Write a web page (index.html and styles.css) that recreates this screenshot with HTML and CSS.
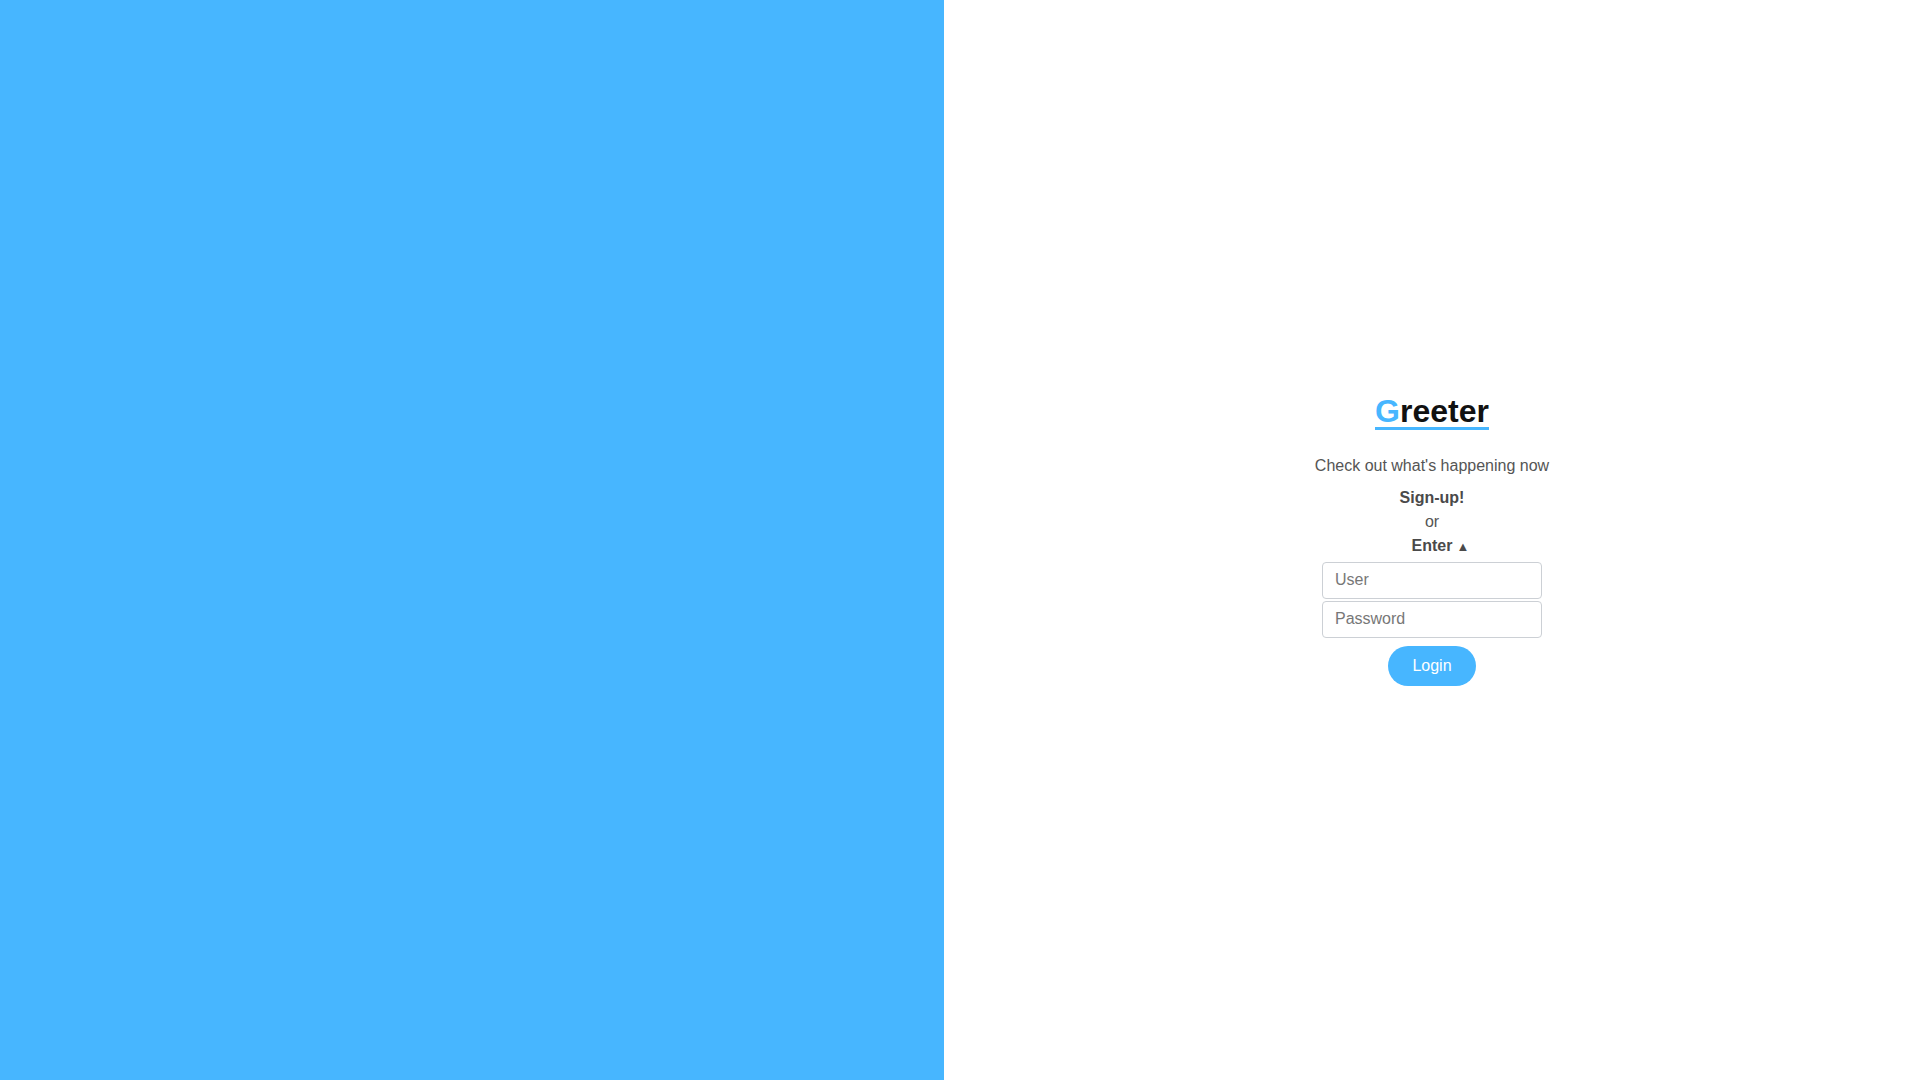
FILE: index.html
```html
<!DOCTYPE html>
<html lang="en">
<head>
<meta charset="utf-8">
<title>Greeter</title>
<link rel="stylesheet" href="styles.css">
</head>
<body>
<div class="page">
  <aside class="hero"></aside>
  <main class="panel">
    <div class="card">
      <h1 class="logo"><span class="logo-g">G</span>reeter</h1>
      <p class="tagline">Check out what's happening now</p>
      <a class="link bold" href="#">Sign-up!</a>
      <span class="or">or</span>
      <div class="enter bold">Enter<span class="arrow">▲</span></div>
      <form class="form">
        <input class="field" type="text" placeholder="User">
        <input class="field" type="password" placeholder="Password">
        <button class="btn" type="button">Login</button>
      </form>
    </div>
  </main>
</div>
</body>
</html>
```
FILE: styles.css
```css
* { box-sizing: border-box; }
html, body { margin: 0; height: 100%; }
body {
  font-family: "Liberation Sans", Arial, sans-serif;
  font-size: 16px;
  color: #555;
  background: #fff;
}
.page {
  display: flex;
  height: 100vh;
}
.hero {
  flex: 0 0 944px;
  background: #47b6ff;
}
.panel {
  flex: 1;
  display: flex;
  align-items: center;
  justify-content: center;
}
.card {
  display: flex;
  flex-direction: column;
  align-items: center;
}
.logo {
  margin: 0;
  font-size: 32px;
  font-weight: 700;
  line-height: 32px;
  color: #111;
  border-bottom: 3px solid #47b6ff;
}
.logo-g { color: #47b6ff; }
.tagline {
  margin: 24px 0 8px;
  line-height: 24px;
  color: #555;
}
.link {
  color: #4a4a4a;
  text-decoration: none;
  line-height: 24px;
}
.bold { font-weight: 700; }
.or {
  line-height: 24px;
  color: #555;
}
.enter {
  position: relative;
  line-height: 24px;
  color: #4a4a4a;
}
.arrow {
  position: absolute;
  left: 100%;
  top: 1px;
  margin-left: 4px;
  font-size: 13px;
}
.form {
  display: flex;
  flex-direction: column;
  align-items: center;
  gap: 2px;
  margin-top: 4px;
}
.field {
  width: 220px;
  height: 37px;
  border: 1px solid #ccd0d5;
  border-radius: 4px;
  padding: 0 12px;
  font-family: "Liberation Sans", Arial, sans-serif;
  font-size: 16px;
  color: #333;
}
.field::placeholder { color: #777; }
.btn {
  margin-top: 6px;
  width: 88px;
  height: 40px;
  border: none;
  border-radius: 20px;
  background: #47b6ff;
  color: #fff;
  font-family: "Liberation Sans", Arial, sans-serif;
  font-size: 16px;
}
```
